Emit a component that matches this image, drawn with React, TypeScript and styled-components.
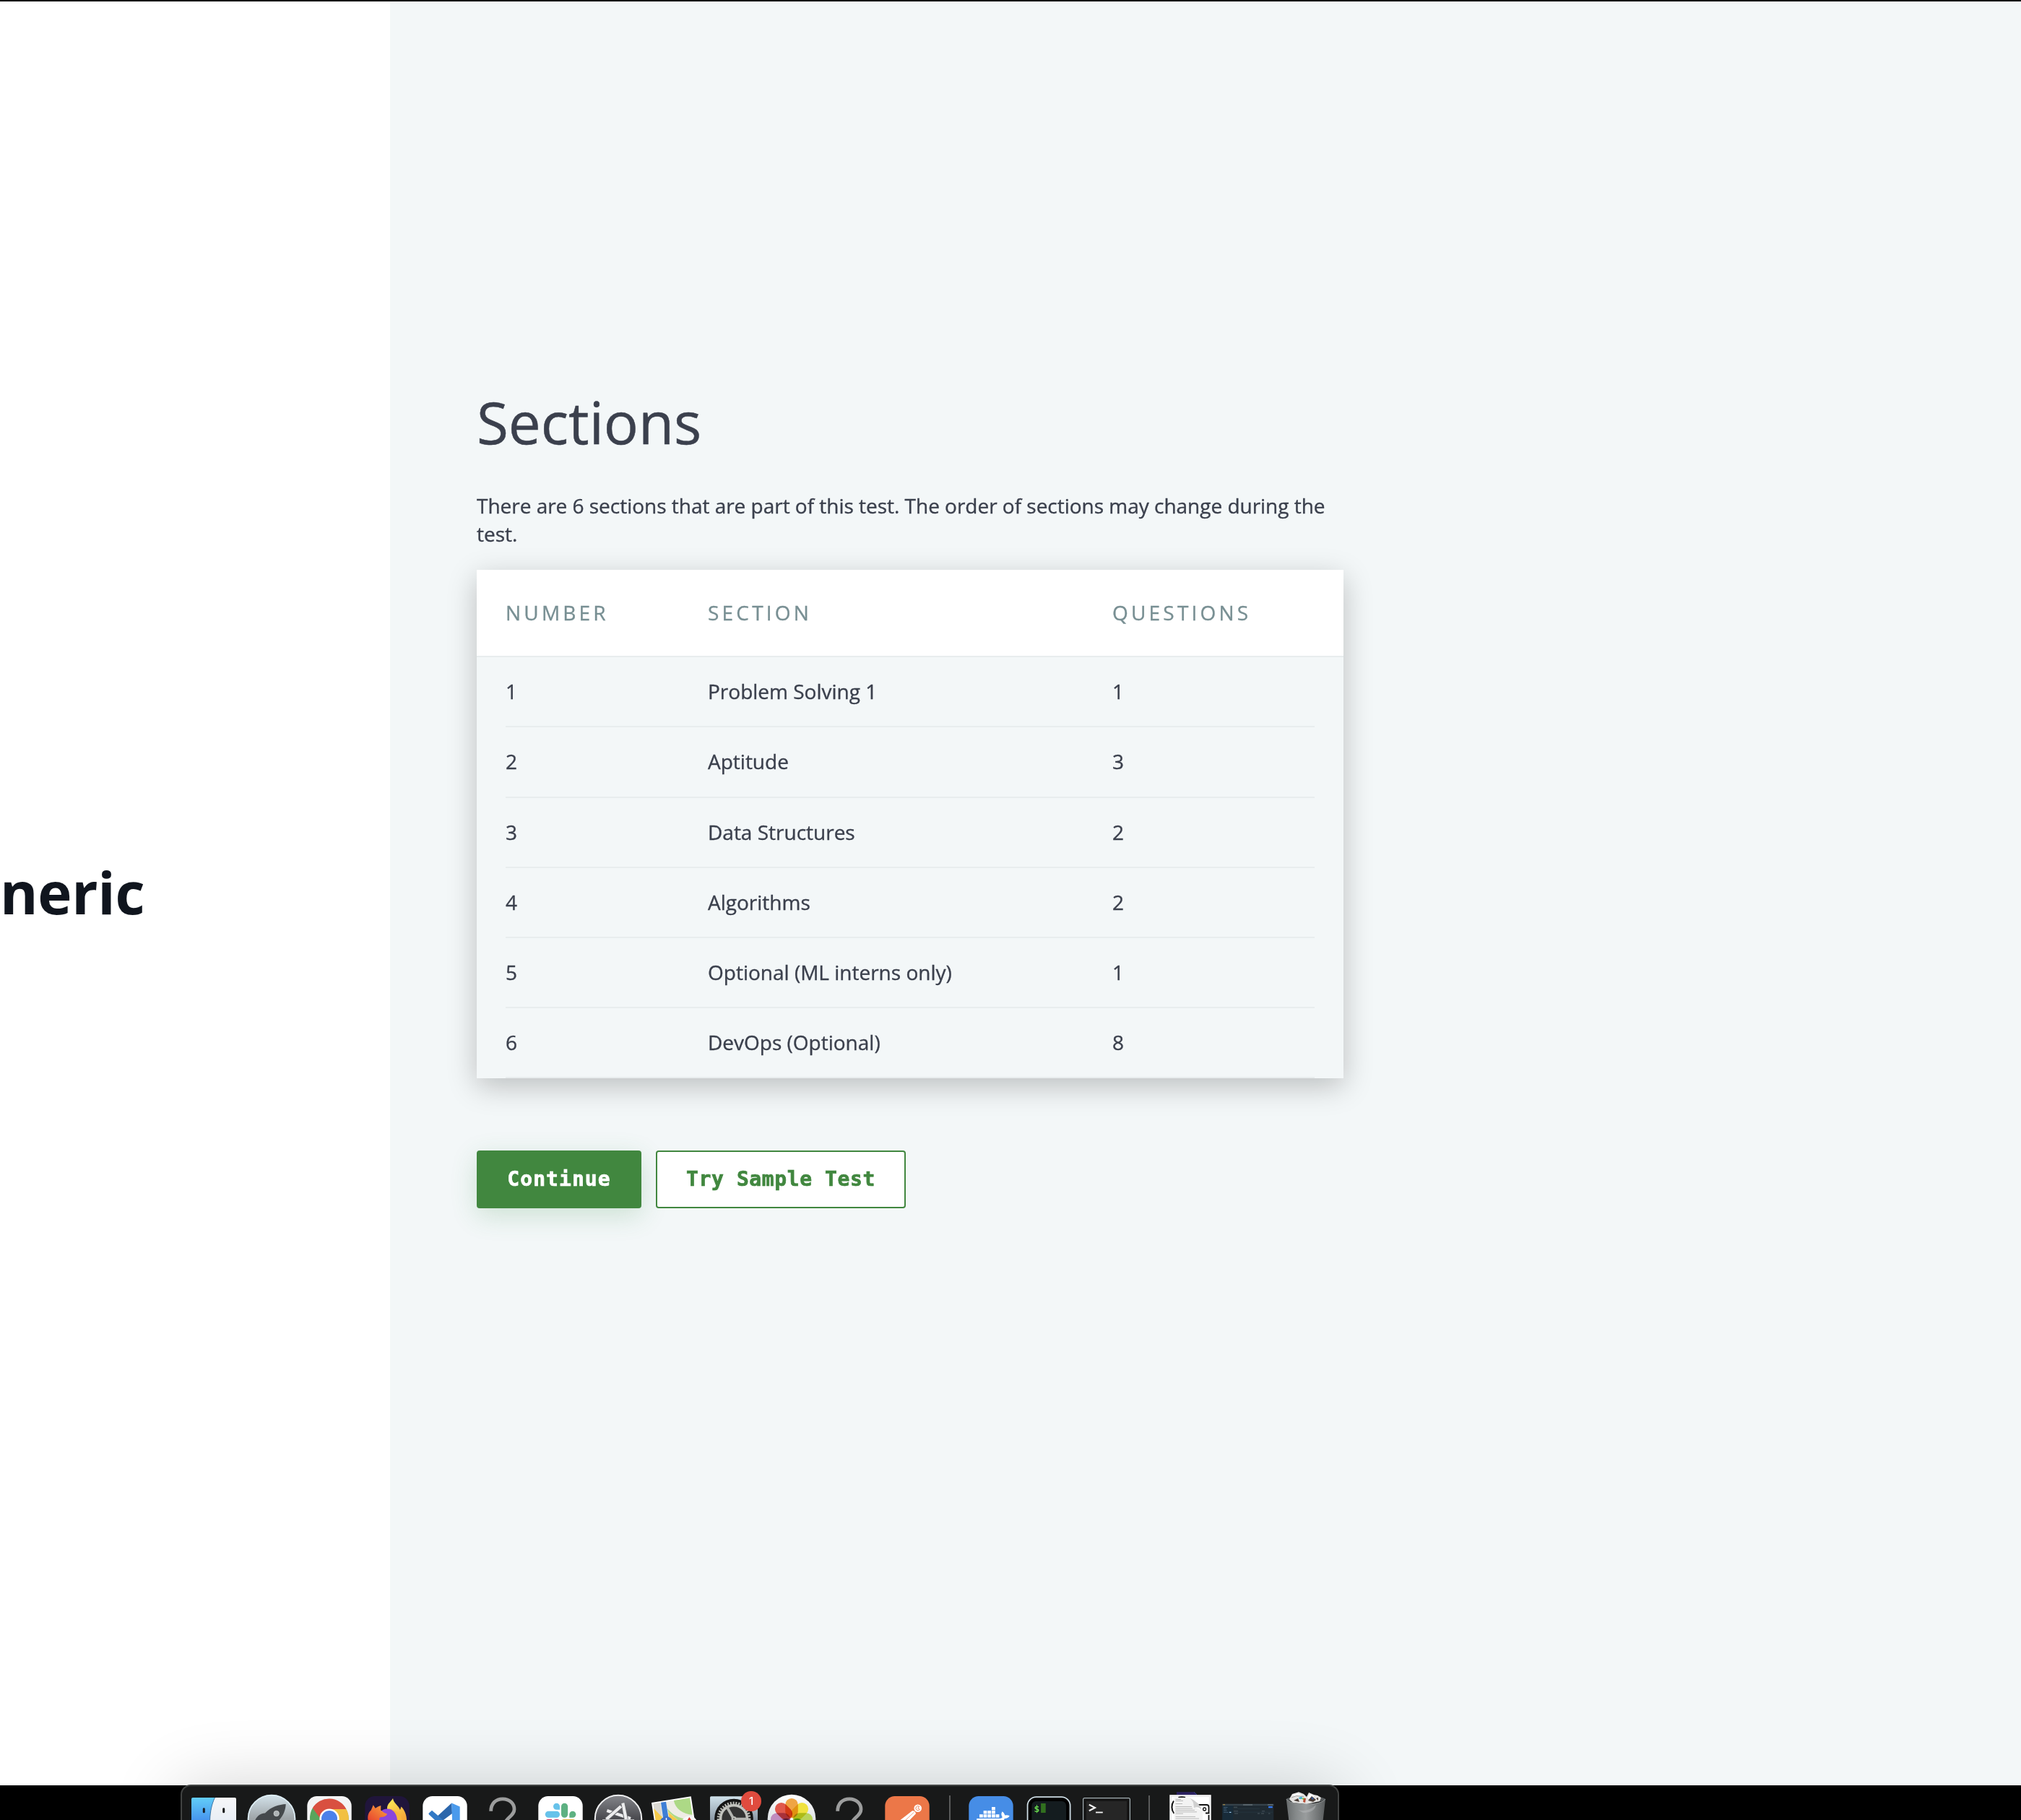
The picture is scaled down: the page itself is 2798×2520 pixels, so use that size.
import React from "react";
import styled, { createGlobalStyle } from "styled-components";

const GlobalStyle = createGlobalStyle`
  *, *::before, *::after { box-sizing: border-box; }
  html, body { margin: 0; padding: 0; background: #000; }
  body { font-family: "Open Sans", "Noto Sans", sans-serif; color: #3b404d; }
`;

const Screen = styled.div`
  width: 2798px;
  height: 2520px;
  padding-top: 2px;
  overflow: hidden;
  display: flex;
  flex-direction: column;
  background: #000;
`;

const Page = styled.div`
  display: flex;
  flex: 0 0 2470px;
`;

const TitlePane = styled.section`
  flex: 0 0 540px;
  display: flex;
  align-items: center;
  padding-bottom: 5px;
  background: #fff;
`;

const TestTitle = styled.h1`
  margin: 0;
  font-size: 80px;
  font-weight: 700;
  line-height: 112px;
  letter-spacing: -0.3px;
  color: #10151e;
`;

const SectionsPane = styled.main`
  flex: 1;
  padding: 526px 0 0 120px;
  background: #f3f7f8;
`;

const Content = styled.div`
  width: 1200px;
  display: flex;
  flex-direction: column;
`;

const Heading = styled.h2`
  margin: 0 0 41px;
  font-size: 80px;
  font-weight: 400;
  line-height: 112px;
  -webkit-text-stroke: 0.5px currentColor;
`;

const Intro = styled.p`
  margin: 0 0 29.6px;
  font-size: 28px;
  line-height: 39.2px;
  letter-spacing: -0.02px;
  -webkit-text-stroke: 0.35px currentColor;
`;

const Card = styled.div`
  display: flex;
  flex-direction: column;
  margin-bottom: 99.6px;
  background: #f3f7f8;
  box-shadow: 0 11px 38px rgba(0, 0, 0, 0.23);
  -webkit-text-stroke: 0.35px currentColor;
`;

const HeaderRow = styled.div`
  display: grid;
  grid-template-columns: 280px 560px 280px;
  padding: 40px;
  background: #fff;
  border-bottom: 2px solid #e8edee;
  font-size: 28px;
  line-height: 39.2px;
  letter-spacing: 4.2px;
  color: #788f93;
  text-transform: uppercase;
`;

const Row = styled.div`
  display: grid;
  grid-template-columns: 280px 560px 280px;
  margin: 0 40px;
  padding: 28px 0;
  border-bottom: 2px solid #e8edee;
  font-size: 28px;
  line-height: 39.2px;
`;

const Actions = styled.div`
  display: flex;
  gap: 20px;
`;

const Button = styled.button<{ $primary?: boolean }>`
  height: 80px;
  width: ${(p) => (p.$primary ? "228px" : "346px")};
  padding: 0;
  border: 2px solid #41873f;
  border-radius: 4px;
  font-family: "DejaVu Sans Mono", "Liberation Mono", monospace;
  font-size: 28px;
  font-weight: 700;
  line-height: 40px;
  letter-spacing: ${(p) => (p.$primary ? "1.05px" : "0.6px")};
  -webkit-text-stroke: 0.7px currentColor;
  color: ${(p) => (p.$primary ? "#fff" : "#41873f")};
  background: ${(p) => (p.$primary ? "#41873f" : "#fff")};
  box-shadow: ${(p) => (p.$primary ? "0 10px 36px rgba(50, 140, 70, 0.2)" : "none")};
`;

const DockBar = styled.footer`
  flex: 0 0 49px;
  margin-top: -1px;
  padding-left: 250px;
  display: flex;
`;

const Dock = styled.nav`
  position: relative;
  display: flex;
  width: 1604px;
  height: 130px;
  flex: none;
  padding: 0 4px;
  border: 2px solid #414342;
  border-radius: 14px;
  background: #181919;
  box-shadow: 0 8px 100px rgba(0, 0, 0, 0.2);
`;

const DockCell = styled.div`
  position: relative;
  flex: 0 0 80px;
  height: 47px;
`;

const Glyph = styled.svg`
  display: block;
  width: 80px;
  height: 47px;
`;

const Separator = styled.div`
  flex: 0 0 36px;
  padding: 13px 0 0 18px;
  &::before {
    content: "";
    display: block;
    width: 2px;
    height: 80px;
    background: #595a5a;
  }
`;

const Badge = styled.span`
  position: absolute;
  left: 50px;
  top: 7px;
  width: 28px;
  height: 28px;
  border-radius: 50%;
  background: #e04b3e;
  color: #fff;
  font: 500 15px/28px Inter, sans-serif;
  text-align: center;
`;

const Icon = ({ children }: { children: React.ReactNode }) => (
  <Glyph viewBox="0 0 80 47" aria-hidden="true">{children}</Glyph>
);

const Tile = ({ fill }: { fill: string }) => (
  <rect x="9.3" y="14" width="61.4" height="61.4" rx="13.5" fill={fill} />
);

const Finder = () => (
  <Icon>
    <defs>
      <linearGradient id="fl" x1="0" y1="0" x2="0" y2="1">
        <stop offset="0" stopColor="#62cdf8" />
        <stop offset="1" stopColor="#4795ee" />
      </linearGradient>
      <linearGradient id="fr" x1="0" y1="0" x2="0" y2="1">
        <stop offset="0" stopColor="#f6f6f8" />
        <stop offset="1" stopColor="#e9eef5" />
      </linearGradient>
    </defs>
    <path d="M11 16H41.5C37 25 35 36 34.6 47H9V18Q9 16 11 16Z" fill="url(#fl)" />
    <path d="M41.5 16H69Q71 16 71 18V47H34.6C35 36 37 25 41.5 16Z" fill="url(#fr)" />
    <path d="M41.5 16C37 25 35 36 34.6 47" fill="none" stroke="#2b6da5" strokeWidth="0.8" />
    <rect x="24.8" y="30.3" width="3" height="7" rx="1.4" fill="#151d26" />
    <rect x="52.2" y="30.3" width="3" height="7" rx="1.4" fill="#151515" />
  </Icon>
);

const Launchpad = () => (
  <Icon>
    <defs>
      <linearGradient id="lp" x1="0" y1="0" x2="0" y2="1">
        <stop offset="0" stopColor="#d3e2ea" />
        <stop offset="0.5" stopColor="#9fa5a8" />
      </linearGradient>
    </defs>
    <circle cx="40" cy="45" r="32.4" fill="url(#lp)" stroke="#dfeff6" strokeWidth="1.8" />
    <path d="M59.7 25C51 25.5 39 28.5 31 37.5C25 37.5 20.5 41 17.3 47H50.5C56 41.5 59.5 33 59.7 25Z" fill="#45494c" />
    <circle cx="46.7" cy="38" r="3.7" fill="#aeb3b5" stroke="#d0d4d5" strokeWidth="0.8" />
  </Icon>
);

const Chrome = () => (
  <Icon>
    <Tile fill="#f3f3f4" />
    <circle cx="40" cy="45.3" r="26.7" fill="#58a55c" />
    <path d="M40 45L40 31.8H63.3A26.7 26.7 0 0 1 66.7 47H40Z" fill="#f2c042" />
    <path d="M16.7 30.6A26.7 26.7 0 0 1 63.3 31.9H40L29 47Z" fill="#d95040" />
    <path d="M16.7 30.6L27 47H13.3A26.7 26.7 0 0 1 16.7 30.6Z" fill="#58a55c" />
    <circle cx="40" cy="45" r="13.6" fill="#fff" />
    <circle cx="40" cy="45" r="11" fill="#4b80ea" />
  </Icon>
);

const Firefox = () => (
  <Icon>
    <defs>
      <linearGradient id="ffy" x1="0" y1="0" x2="0.6" y2="1">
        <stop offset="0" stopColor="#fff05a" />
        <stop offset="1" stopColor="#f6a83a" />
      </linearGradient>
      <linearGradient id="ffo" x1="0" y1="1" x2="1" y2="0">
        <stop offset="0" stopColor="#e8442f" />
        <stop offset="1" stopColor="#f9a63c" />
      </linearGradient>
    </defs>
    <Tile fill="#20153b" />
    <path d="M48 17C49 24 55 26 58 33L59.5 28.5C64 33 67 40 67 47H40V30C40.5 24 45 22 48 17Z" fill="url(#ffy)" />
    <circle cx="40.5" cy="46" r="14.5" fill="#8a45dc" />
    <path d="M41 31.8C46 31 53 36 54 47H60C60 39 53 32.5 41 31.8Z" fill="#f9b43c" />
    <path d="M20.7 26.3L23.7 30.8Q27 28 31.3 27L31.2 33.6Q35 37.2 40 38.4Q39 42.5 31 43Q28.5 44 29.5 47H13.5C12.5 41 14.5 36 17.8 33.2Z" fill="url(#ffo)" />
  </Icon>
);

const VSCode = () => (
  <Icon>
    <Tile fill="#fff" />
    <path d="M49.3 23.6L26.5 44.5L30 47H38L50 38Z" fill="#2b66ac" />
    <path d="M49.3 23.6L60.7 28.4V47H50Z" fill="#4a9aec" />
    <path d="M22 33.8L17.8 37.6Q17 38.6 18 39.6L26 47H37.5Z" fill="#3279c6" />
  </Icon>
);

const Missing = () => (
  <Icon>
    <path d="M23.7 34.8C23.7 24 30.5 17.8 40 17.8S56 24.5 56 32.2C56 40 47.5 43 43.5 50" fill="none" stroke="#9c9d9d" strokeWidth="4.8" />
  </Icon>
);

const Slack = () => (
  <Icon>
    <Tile fill="#fff" />
    <path d="M39 28.2V32.7H34.5A4.5 4.5 0 1 1 39 28.2Z" fill="#67c2ea" />
    <rect x="18.8" y="34.7" width="20.2" height="9" rx="4.5" fill="#67c2ea" />
    <rect x="41" y="23.7" width="9.1" height="20" rx="4.5" fill="#5db182" />
    <path d="M52.3 43.7V39.2A4.5 4.5 0 1 1 56.8 43.7Z" fill="#5db182" />
    <path d="M20 47Q21 46 23 46H28V47ZM30.5 47Q32 46 34.5 46T38.5 47Z" fill="#cf2d5c" />
    <path d="M42 47Q43 46 45 46H57Q59 46 60 47Z" fill="#dfb13f" />
  </Icon>
);

const AppStore = () => (
  <Icon>
    <defs>
      <linearGradient id="as" x1="0" y1="0" x2="0" y2="1">
        <stop offset="0" stopColor="#84858a" />
        <stop offset="0.5" stopColor="#4b4b50" />
      </linearGradient>
    </defs>
    <circle cx="40" cy="45" r="32.2" fill="url(#as)" stroke="#f0f0f1" strokeWidth="2" />
    <g strokeWidth="4.2" stroke="#ededee">
      <path d="M24.3 34L57 45" />
      <path d="M46 23.5L50.8 46" stroke="#66676b" strokeWidth="6" />
      <path d="M46.3 23.5L50.8 46" />
      <path d="M23.5 46L43.8 28" stroke="#66676b" strokeWidth="6" />
      <path d="M23.5 46L43.8 28" />
      <path d="M18 47H62" strokeWidth="2" stroke="#b9b9bb" />
    </g>
  </Icon>
);

const Maps = () => (
  <Icon>
    <path d="M6 23L60.7 14.2L65.7 47H9.7Z" fill="#fff" />
    <path d="M8.3 24.6L59 16.6L63.7 47H11.5Z" fill="#eeece5" />
    <path d="M8.3 24.6L18 23L21 44L9.5 31.5Z" fill="#dad8d2" />
    <path d="M9.2 31L20.5 42.8L21.2 47H11.5Z" fill="#f5ca4a" />
    <path d="M36.8 20L59 16.6L62.6 39.8C50 39 39 32 36.8 20Z" fill="#add986" />
    <path d="M28 31C33 38 41 43 50 45L51 47H42L29 35.5Z" fill="#add986" />
    <path d="M29 36L42 47H31Z" fill="#f5ca4a" />
    <path d="M19 22.8L26 21.7L30 47H22.5Z" fill="#3e7fd6" />
    <circle cx="26.5" cy="51" r="9" fill="#3d70c8" />
    <path d="M26.5 44V48" stroke="#fff" strokeWidth="1.5" />
    <circle cx="58.5" cy="52.5" r="11" fill="#f7f7f7" />
    <path d="M58.3 43L61 47H55.8Z" fill="#cf3329" />
  </Icon>
);

const Settings = () => (
  <Icon>
    <defs>
      <linearGradient id="st" x1="0" y1="0" x2="0" y2="1">
        <stop offset="0" stopColor="#cfe1ea" />
        <stop offset="0.5" stopColor="#8b98a5" />
      </linearGradient>
    </defs>
    <rect x="7" y="14.3" width="66" height="66" rx="1.5" fill="url(#st)" />
    <circle cx="40" cy="44.5" r="26.8" fill="#141414" />
    <circle cx="40" cy="45" r="21.4" fill="#393939" stroke="#bbbcb7" strokeWidth="4" strokeDasharray="1.9 1.9" />
    <circle cx="40" cy="45" r="18.3" fill="#333" stroke="#c2c3be" strokeWidth="3.4" />
    <path d="M40 46L30.5 29M40 45.5H58" stroke="#b4b5b1" strokeWidth="3.6" />
    <circle cx="40" cy="45.5" r="3.4" fill="#bbbcb7" />
    <circle cx="40" cy="45" r="1" fill="#666" />
  </Icon>
);

const petals = ["#efa544", "#f0e23f", "#b9d35a", "#6fbf8f", "#5fa8d8", "#8d87cf", "#c08cbf", "#e0584c"];

const Photos = () => (
  <Icon>
    <defs>
      <linearGradient id="ph" x1="0" y1="0" x2="0" y2="1">
        <stop offset="0" stopColor="#fff" />
        <stop offset="0.5" stopColor="#e1e4e7" />
      </linearGradient>
    </defs>
    <circle cx="40" cy="45" r="33.3" fill="url(#ph)" />
    <g style={{ isolation: "isolate" }}>
      {petals.map((c, i) => (
        <rect
          key={c}
          x="31.2"
          y="17"
          width="17.6"
          height="27"
          rx="8.8"
          fill={c}
          transform={`rotate(${i * 45} 40 46)`}
          style={{ mixBlendMode: "multiply" }}
        />
      ))}
    </g>
    <circle cx="40" cy="46" r="1.6" fill="#fff" />
  </Icon>
);

const Postman = () => (
  <Icon>
    <Tile fill="#ec7748" />
    <circle cx="54.7" cy="30.7" r="5.3" fill="#fff" />
    <path d="M56.6 28.2A3 3 0 1 0 57.4 32.4L54.8 30.8Z" fill="none" stroke="#ec7748" strokeWidth="0.9" />
    <path d="M47 34.3Q51.2 34 52 38.2L43.5 47H30.5Z" fill="#fff" />
    <path d="M49.5 36.2L36.8 48" stroke="#ec7748" strokeWidth="0.7" />
  </Icon>
);

const Docker = () => (
  <Icon>
    <Tile fill="#468de6" />
    <g fill="#fff">
      {[24, 29.6, 35.3, 41, 46.6].map((x) => (
        <rect key={x} x={x} y="39.2" width="4.8" height="4.4" />
      ))}
      {[29.6, 35.3, 41].map((x) => (
        <rect key={x} x={x} y="34.1" width="4.8" height="4.3" />
      ))}
      <rect x="41" y="29" width="4.8" height="4.3" />
      <path d="M20.2 44.9H52Q54.8 44.8 55.8 43.2Q53 39 55.6 35.3Q58.8 37.2 59.4 40.4Q63.2 39.6 65.7 41.2Q63.6 45 58.8 45L57.8 47H20.3Z" />
    </g>
  </Icon>
);

const ITerm = () => (
  <Icon>
    <rect x="10.6" y="15.2" width="59" height="60" rx="12" fill="#000" stroke="#cddce4" strokeWidth="1.8" />
    <rect x="16.3" y="21" width="47.8" height="50" rx="6" fill="#141c1f" />
    <text x="19.4" y="35.6" fontFamily="DejaVu Sans Mono, monospace" fontSize="13" fontWeight="700" fill="#69dc4e">$</text>
    <rect x="29.1" y="24" width="6.6" height="13" fill="#31701f" />
  </Icon>
);

const Terminal = () => (
  <Icon>
    <rect x="7.6" y="16.6" width="64.8" height="60" rx="2" fill="#151515" stroke="#a4b0b4" strokeWidth="1.2" />
    <rect x="12" y="21" width="56" height="50" fill="#262626" />
    <path d="M15.8 25.8L24 30L15.8 34.3" fill="none" stroke="#f4f4f4" strokeWidth="2.1" />
    <path d="M25 36.5H34.8" stroke="#f4f4f4" strokeWidth="1.8" />
  </Icon>
);

const Documents = () => (
  <Icon>
    <path d="M21 8.3H45L49 12V15H21Z" fill="#2b2160" />
    <path d="M45 8.3L49 12" stroke="#3c50a8" strokeWidth="0.8" />
    <rect x="11.3" y="12.2" width="57.4" height="40" fill="#fafafa" />
    <rect x="13.4" y="14.4" width="53.2" height="40" fill="#fff" stroke="#dedede" strokeWidth="0.7" />
    <path d="M17 20.5C13.5 26 13.5 33 17.5 38M23.5 16Q28 14.5 33 16" fill="none" stroke="#111" strokeWidth="2" />
    <path d="M44 26H62.5Q65.5 26 65.5 29V37.5H61M65.5 40V47" fill="none" stroke="#111" strokeWidth="1.8" />
    <circle cx="59.6" cy="32" r="2" fill="none" stroke="#111" strokeWidth="1.3" />
    <path d="M17.7 16H38Q44 20 46 29L57 35V47H17.7Z" fill="#f3f3f3" />
    <path d="M38 16Q45 20 45 30Q52 27 57 35Q53 22 38 16Z" fill="#cfcfcf" />
    <path d="M19.5 18.5H27M19.5 20.5H30M19.5 24.5H29M19.5 28.5H42M19.5 31H43M19.5 33.4H46M19.5 35.8H49M19.5 38.2H30M19.5 42.4H47M19.5 45H52" stroke="#aaa" strokeWidth="0.8" />
  </Icon>
);

const WindowThumb = () => (
  <Icon>
    <rect x="4.3" y="24.8" width="71" height="30" fill="#1f2a32" />
    <rect x="4.3" y="27" width="14.7" height="30" fill="#182b39" />
    <rect x="4.3" y="24.8" width="71" height="2.2" fill="#36434b" />
    <path d="M5.2 25.8H8" stroke="#c39a45" strokeWidth="1" />
    <path d="M33 26H46M67 26H74.5" stroke="#79848a" strokeWidth="1.2" />
    <path d="M6 29.5H11.5M6 31.7H10M6 34H10.5M6 36.4H13" stroke="#456078" strokeWidth="0.9" />
    <path d="M14 36.4H16.5" stroke="#9ecbf0" strokeWidth="1.2" />
    <path d="M20 29.3H25M20 34.8H26M21 38H26M59 34.8H63M53 38H56M58 38H62M68 38H70.5" stroke="#56636b" strokeWidth="0.8" />
    <path d="M20 31.3H56M20 36.2H74" stroke="#2a3a46" strokeWidth="0.6" />
    <rect x="68" y="28" width="5.8" height="2.2" rx="0.5" fill="#3478f2" />
  </Icon>
);

const Trash = () => (
  <Icon>
    <defs>
      <linearGradient id="tr" x1="0" y1="0" x2="1" y2="0">
        <stop offset="0" stopColor="#686c6d" />
        <stop offset="0.25" stopColor="#868a8b" />
        <stop offset="0.5" stopColor="#999c9d" />
        <stop offset="0.8" stopColor="#747778" />
        <stop offset="1" stopColor="#585b5c" />
      </linearGradient>
    </defs>
    <ellipse cx="39.9" cy="18.4" rx="27" ry="4" fill="#55595b" />
    <path d="M17 18L21 11L26 9.4L30 8.3L37 11L41 15L44 9L51 12L56 13L61 16L59 21L41 25L22 23Z" fill="#e6e5e3" />
    <path d="M21 12L29 10L35 13L25 14ZM42 16L46 10.5L51 14L47 20Z" fill="#fff" />
    <path d="M20 16L27 13.5L37 14.5" fill="none" stroke="#8b8b8b" strokeWidth="0.8" />
    <path d="M23 20L29 17L31 22ZM43 20L48 14L54 19L50 22ZM54 17L57 16L57 20Z" fill="#4a3e38" />
    <path d="M30 16L34 14.5L36 18L31 18Z" fill="#47b5d4" />
    <path d="M34 17L38 16L37 20Z" fill="#8fc447" />
    <path d="M37 17L40 17L39 23L36 22Z" fill="#b94d36" />
    <path d="M47 15L51 17L49 19Z" fill="#345eaa" />
    <path d="M12.8 18C16 22.5 26 25 40 25S64 22.5 67 18L63.7 47H16.3Z" fill="url(#tr)" />
    <path d="M12.8 18C16 22.5 26 25 40 25S64 22.5 67 18" fill="none" stroke="#a2a6a7" strokeWidth="0.8" />
    <path d="M29 33Q42 37 54 26Q52 37 36 37Z" fill="#b6b8b9" opacity="0.5" />
  </Icon>
);

const mainApps = [
  Finder, Launchpad, Chrome, Firefox, VSCode, Missing, Slack,
  AppStore, Maps, Settings, Photos, Missing, Postman,
];
const devApps = [Docker, ITerm, Terminal];
const fileApps = [Documents, WindowThumb, Trash];

const DockGroup = ({ apps }: { apps: React.ComponentType[] }) => (
  <>
    {apps.map((App, i) => (
      <DockCell key={i}>
        <App />
        {App === Settings && <Badge>1</Badge>}
      </DockCell>
    ))}
  </>
);

const sections: [string, number][] = [
  ["Problem Solving 1", 1],
  ["Aptitude", 3],
  ["Data Structures", 2],
  ["Algorithms", 2],
  ["Optional (ML interns only)", 1],
  ["DevOps (Optional)", 8],
];

export default function App() {
  return (
    <>
      <GlobalStyle />
      <Screen>
        <Page>
          <TitlePane>
            <TestTitle>neric</TestTitle>
          </TitlePane>
          <SectionsPane>
            <Content>
              <Heading>Sections</Heading>
              <Intro>
                There are 6 sections that are part of this test. The order of sections may change during the test.
              </Intro>
              <Card>
                <HeaderRow>
                  <span>Number</span>
                  <span>Section</span>
                  <span>Questions</span>
                </HeaderRow>
                {sections.map(([name, questions], i) => (
                  <Row key={name}>
                    <span>{i + 1}</span>
                    <span>{name}</span>
                    <span>{questions}</span>
                  </Row>
                ))}
              </Card>
              <Actions>
                <Button $primary>Continue</Button>
                <Button>Try Sample Test</Button>
              </Actions>
            </Content>
          </SectionsPane>
        </Page>
        <DockBar>
          <Dock>
            <DockGroup apps={mainApps} />
            <Separator />
            <DockGroup apps={devApps} />
            <Separator />
            <DockGroup apps={fileApps} />
          </Dock>
        </DockBar>
      </Screen>
    </>
  );
}
